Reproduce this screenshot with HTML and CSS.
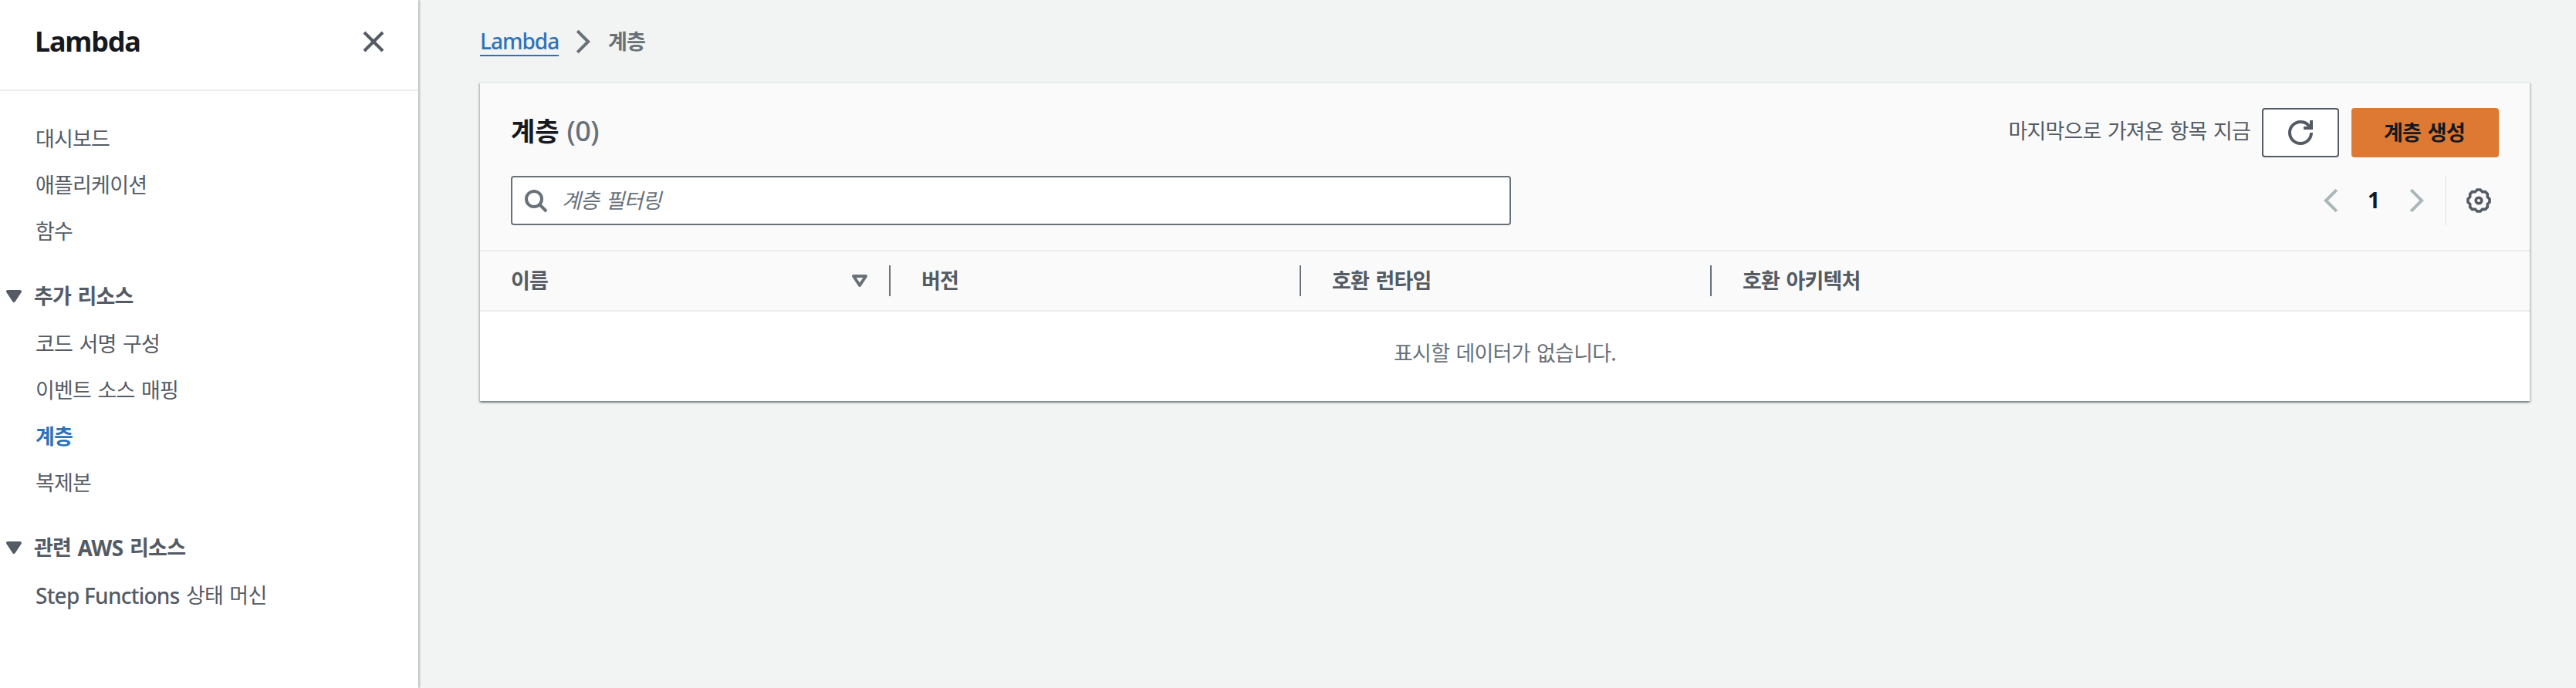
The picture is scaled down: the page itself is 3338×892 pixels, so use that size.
FILE: index.html
```
<!DOCTYPE html>
<html lang="ko">
<head>
<meta charset="utf-8">
<title>Lambda</title>
<link rel="stylesheet" href="styles.css">
</head>
<body>
<nav class="sidebar">
  <header class="sidebar-head">
    <h1 class="service">Lambda</h1>
    <svg class="icon close" viewBox="0 0 32 32"><path d="M4 4l24 24M28 4L4 28"/></svg>
  </header>
  <div class="nav">
    <ul class="nav-list">
      <li class="nav-item">대시보드</li>
      <li class="nav-item">애플리케이션</li>
      <li class="nav-item">함수</li>
    </ul>
    <h2 class="nav-section"><svg class="caret" viewBox="0 0 20 16"><path d="M2 2h16l-8 12z"/></svg><span>추가 리소스</span></h2>
    <ul class="nav-list">
      <li class="nav-item">코드 서명 구성</li>
      <li class="nav-item">이벤트 소스 매핑</li>
      <li class="nav-item active">계층</li>
      <li class="nav-item">복제본</li>
    </ul>
    <h2 class="nav-section"><svg class="caret" viewBox="0 0 20 16"><path d="M2 2h16l-8 12z"/></svg><span>관련 <span class="latin bold">AWS</span> 리소스</span></h2>
    <ul class="nav-list">
      <li class="nav-item"><span class="latin">Step Functions</span> 상태 머신</li>
    </ul>
  </div>
</nav>
<main class="main">
  <div class="crumbs">
    <a class="crumb-link">Lambda</a>
    <svg class="chevron crumb-sep" viewBox="0 0 20 32"><path d="M2.2 2.2L16.1 16L2.2 29.8"/></svg>
    <span class="crumb-current">계층</span>
  </div>
  <section class="card">
    <div class="card-head">
      <div class="title-row">
        <h2 class="title">계층<span class="count">(0)</span></h2>
        <span class="fetched">마지막으로 가져온 항목 지금</span>
        <button class="btn refresh"><svg class="icon" viewBox="0 0 16 16"><path d="M10 5h5V0M15 8a7 7 0 0 1-7 7 7 7 0 0 1-7-7 7 7 0 0 1 7-7 6.87 6.87 0 0 1 6.3 4"/></svg></button>
        <button class="btn primary">계층 생성</button>
      </div>
      <div class="tool-row">
        <div class="search"><svg class="icon" viewBox="0 0 16 16"><circle cx="7" cy="7" r="5"/><path d="M15 15l-4.5-4.5"/></svg><span class="placeholder">계층 필터링</span></div>
        <div class="pager">
          <svg class="chevron" viewBox="0 0 20 32"><path d="M17.8 2.2L3.9 16L17.8 29.8"/></svg>
          <span class="page">1</span>
          <svg class="chevron" viewBox="0 0 20 32"><path d="M2.2 2.2L16.1 16L2.2 29.8"/></svg>
        </div>
        <div class="settings">
          <svg class="icon gear" viewBox="0 0 16 16"><path d="M7 1H9L10.33 2.36L12.24 2.34L13.66 3.76L13.64 5.67L15 7V9L13.64 10.33L13.66 12.24L12.24 13.66L10.33 13.64L9 15H7L5.67 13.64L3.76 13.66L2.34 12.24L2.36 10.33L1 9V7L2.36 5.67L2.34 3.76L3.76 2.34L5.67 2.36Z"/><circle cx="8" cy="8" r="1.9"/></svg>
        </div>
      </div>
    </div>
    <div class="columns">
      <div class="column"><span>이름</span><svg class="sort" viewBox="0 0 20 16"><path d="M2 2h16l-8 12z"/></svg></div>
      <div class="column"><span>버전</span></div>
      <div class="column"><span>호환 런타임</span></div>
      <div class="column last"><span>호환 아키텍처</span></div>
    </div>
    <div class="empty">표시할 데이터가 없습니다.</div>
  </section>
</main>
</body>
</html>
```
FILE: styles.css
```
* { box-sizing: border-box; }

body {
  margin: 0;
  height: 892px;
  display: flex;
  overflow: hidden;
  background: #f2f3f3;
  color: #545b64;
  font: 27px/40px "Noto Sans CJK KR", sans-serif;
  letter-spacing: -.8px;
  word-spacing: 1.6px;
}

h1, h2, ul { margin: 0; padding: 0; list-style: none; }
svg { display: block; flex: none; overflow: visible; fill: none; stroke: currentColor; }

.icon { width: 32px; height: 32px; stroke-width: 2; }
.gear { stroke-width: 1.8; }
.chevron { width: 20px; height: 32px; stroke-width: 4; }
.latin {
  font-family: "Noto Sans", sans-serif;
  font-size: 28px;
  font-weight: 500;
  line-height: 1;
  letter-spacing: -.75px;
  word-spacing: 0;
  vertical-align: -1px;
}
.latin.bold { font-weight: 700; letter-spacing: -.5px; }

/* Sidebar */
.sidebar {
  width: 542px;
  flex: none;
  background: #fff;
  box-shadow: 2px 0 2px rgba(0, 28, 36, .25);
}
.sidebar-head {
  height: 118px;
  padding: 0 42px 8px 45px;
  display: flex;
  align-items: center;
  justify-content: space-between;
  border-bottom: 2px solid #eaeded;
}
.service {
  color: #16191f;
  font: 700 36px/44px "Noto Sans", sans-serif;
  letter-spacing: -1.2px;
}
.close { stroke-width: 4; }
.nav { padding-top: 31px; }
.nav-item { height: 60px; padding-left: 46px; line-height: 60px; }
.nav-item.active { color: #2e73b8; font-weight: 700; }
.nav-section {
  height: 86px;
  padding: 22px 0 0 8px;
  display: flex;
  align-items: center;
  gap: 16px;
  font-size: 27px;
  font-weight: 700;
}
.caret {
  width: 20px;
  height: 16px;
  margin-top: 2px;
  fill: currentColor;
  stroke-width: 4;
  stroke-linejoin: round;
}

/* Content */
.main { flex: 1; padding: 35px 60px 0 80px; }
.crumbs { height: 38px; display: flex; align-items: center; color: #687078; }
.crumb-link {
  width: 102px;
  color: #2e73b8;
  border-bottom: 2px solid #2e73b8;
  font: 500 28px/36px "Noto Sans", sans-serif;
  letter-spacing: -1px;
}
.crumb-sep { margin: 0 22px; }
.crumb-current { padding-bottom: 3px; font-weight: 700; }

.card {
  margin-top: 33px;
  height: 414px;
  background: #fff;
  border-top: 2px solid #eaeded;
  box-shadow: 0 2px 2px rgba(0, 28, 36, .3), 2px 2px 2px rgba(0, 28, 36, .15), -2px 2px 2px rgba(0, 28, 36, .15);
}
.card-head {
  height: 218px;
  padding: 32px 40px 0;
  display: flex;
  flex-direction: column;
  gap: 24px;
  background: #fafafa;
  border-bottom: 2px solid #eaeded;
}
.title-row, .tool-row { height: 64px; display: flex; align-items: center; }
.title {
  margin-right: auto;
  padding-bottom: 6px;
  display: flex;
  align-items: baseline;
  gap: 10px;
  color: #16191f;
  font-size: 34px;
  letter-spacing: 0;
}
.count { color: #687078; font: 500 36px/40px "Noto Sans", sans-serif; letter-spacing: -.6px; }
.fetched { padding-bottom: 7px; margin-right: 15px; }

.btn {
  height: 64px;
  padding: 0;
  display: flex;
  align-items: center;
  justify-content: center;
  border: 2px solid #545b64;
  border-radius: 4px;
  background: #fff;
  color: #545b64;
  font: 700 27px/40px "Noto Sans CJK KR", sans-serif;
  letter-spacing: -.75px;
  word-spacing: 1.8px;
}
.refresh { width: 100px; margin-right: 16px; }
.primary { width: 191px; padding: 0 2px 3px 0; border-color: #dd7933; background: #dd7933; color: #16191f; }

.search {
  width: 1296px;
  height: 64px;
  margin-right: auto;
  padding-left: 14px;
  display: flex;
  align-items: center;
  gap: 18px;
  border: 2px solid #687078;
  border-radius: 4px;
  background: #fff;
  color: #687078;
}
.placeholder { padding-bottom: 2px; font-style: italic; }
.pager {
  height: 64px;
  padding-right: 26px;
  display: flex;
  align-items: center;
  gap: 38px;
  border-right: 2px solid #eaeded;
  color: #aab7b8;
}
.page {
  width: 16px;
  padding-bottom: 2px;
  color: #16191f;
  font: 700 28px/36px "Noto Sans", sans-serif;
}
.settings { padding: 0 10px 0 26px; }

.columns {
  height: 78px;
  display: flex;
  align-items: center;
  background: #fafafa;
  border-bottom: 2px solid #eaeded;
  font-weight: 700;
}
.column {
  width: 532px;
  height: 40px;
  padding: 0 28px 0 40px;
  display: flex;
  align-items: center;
  justify-content: space-between;
  border-right: 2px solid #687078;
}
.column span { padding-bottom: 3px; }
.column.last { border-right: 0; }
.sort { width: 20px; height: 16px; color: #687078; stroke-width: 4; stroke-linejoin: round; }
.empty { height: 116px; padding-top: 1px; color: #687078; line-height: 104px; text-align: center; }
```
